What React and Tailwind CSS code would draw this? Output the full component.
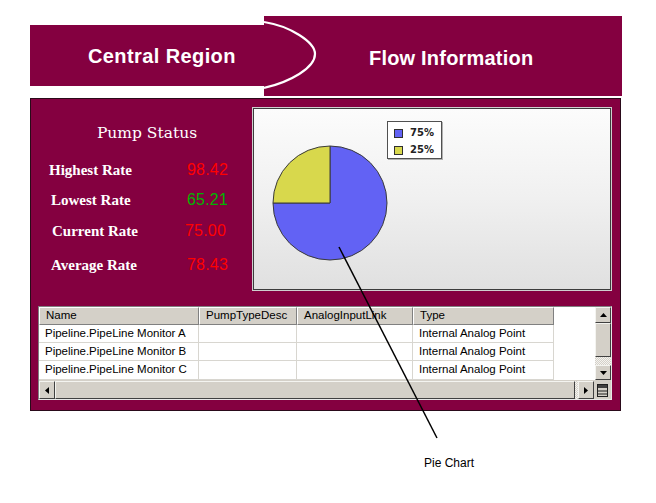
import React from "react";

const maroon = "bg-[#840040]";

function HeaderCell({ w, children }) {
  return (
    <div
      className={`h-full flex items-center pl-[6px] bg-[#d4d0c8] border-t border-l border-t-white border-l-white border-b border-r border-b-[#808080] border-r-[#808080] shrink-0`}
      style={{ width: w }}
    >
      {children}
    </div>
  );
}

function Cell({ w, children }) {
  return (
    <div className="h-full flex items-center pl-[6px] border-r border-[#d8d6d0] shrink-0" style={{ width: w }}>
      {children}
    </div>
  );
}

function Btn({ className = "", children }) {
  return (
    <div
      className={`flex items-center justify-center bg-[#d4d0c8] border-t border-l border-t-[#f4f4f0] border-l-[#f4f4f0] border-b border-r border-b-[#404040] border-r-[#404040] shrink-0 ${className}`}
    >
      {children}
    </div>
  );
}

const cols = [160, 98, 116, 141];

export default function App() {
  const rows = ["A", "B", "C"];
  return (
    <div className="relative w-[656px] h-[503px] bg-white overflow-hidden" style={{ fontFamily: '"Liberation Sans", Arial, sans-serif' }}>
      <div className="pl-[30px] pt-[16px]">
        {/* Header */}
        <div className="relative flex w-[592px] h-[80px]">
          <div className={`mt-[9px] h-[61px] w-[234px] ${maroon} flex items-center pl-[58px] text-white font-bold text-[20px] tracking-[0.4px]`}>
            Central Region
          </div>
          <div className={`w-[358px] h-[80px] ${maroon} flex items-center pl-[105px] pt-[4px] text-white font-bold text-[20px] tracking-[0.2px]`}>
            Flow Information
          </div>
          <svg className="absolute left-[234px] top-0" width="60" height="80" viewBox="0 0 60 80">
            <path d="M0 6 C 26 10, 51 26, 51 38 C 51 52, 26 66, 0 72" fill="none" stroke="white" strokeWidth="2.2" />
          </svg>
        </div>

        {/* Main panel */}
        <div className={`mt-[2px] w-[591px] h-[313px] border border-[#2a0a1a] ${maroon} flex flex-col`}>
          <div className="flex items-start">
            {/* Left status */}
            <div className="w-[222px] pt-[25px] text-white">
              <div className="h-[18px] leading-[18px] text-center pl-[10px] text-[15.5px]" style={{ fontFamily: '"DejaVu Serif", serif' }}>
                Pump Status
              </div>
              {[
                { l: "Highest Rate", v: "98.42", c: "text-[#ff0000]", mt: "mt-[20px]", lx: "pl-[18px]", vx: "w-[138px]" },
                { l: "Lowest Rate", v: "65.21", c: "text-[#00b400]", mt: "mt-[14px]", lx: "pl-[20px]", vx: "w-[136px]" },
                { l: "Current Rate", v: "75.00", c: "text-[#ff0000]", mt: "mt-[15px]", lx: "pl-[21px]", vx: "w-[133px]" },
                { l: "Average Rate", v: "78.43", c: "text-[#ff0000]", mt: "mt-[18px]", lx: "pl-[20px]", vx: "w-[136px]" },
              ].map((r) => (
                <div key={r.l} className={`flex items-center h-[16px] ${r.mt} ${r.lx}`}>
                  <div className={`${r.vx} shrink-0 text-[15px] font-bold leading-[16px]`} style={{ fontFamily: '"Liberation Serif", serif' }}>
                    {r.l}
                  </div>
                  <div className={`${r.c} text-[16px] leading-[16px] tracking-[0.2px]`} style={{ fontFamily: '"Liberation Sans", Arial, sans-serif' }}>
                    {r.v}
                  </div>
                </div>
              ))}
            </div>

            {/* Chart */}
            <div className="mt-[9px] w-[358px] h-[182px] border border-[#3c3c3c] shadow-[0_0_0_1px_#cfcfcf] bg-gradient-to-b from-[#fcfcfc] via-[#f0f0f0] to-[#e0e0e0] flex items-start">
              <svg className="ml-[18px] mt-[36px] shrink-0" width="116" height="116" viewBox="0 0 116 116">
                <path d="M58 58 L58 1 A57 57 0 1 1 1 58 Z" fill="#6262f4" stroke="#3a3a3a" strokeWidth="1" />
                <path d="M58 58 L1 58 A57 57 0 0 1 58 1 Z" fill="#d8d84c" stroke="#3a3a3a" strokeWidth="1" />
              </svg>
              <div className="-ml-[1px] mt-[12px] w-[55px] h-[38px] bg-white border border-[#505050] shadow-[1px_1px_0_#b0b0b0] pt-[4px] pl-[6px]" style={{ fontFamily: '"DejaVu Sans", Verdana, sans-serif' }}>
                {[
                  ["75%", "bg-[#6262f4]"],
                  ["25%", "bg-[#d8d84c]"],
                ].map(([t, c]) => (
                  <div key={t} className="flex items-center h-[14px] mb-[3px]">
                    <div className={`w-[9px] h-[9px] ${c} border border-[#303030]`} />
                    <div className="ml-[7px] text-[10px] font-bold text-[#222] leading-[14px]">{t}</div>
                  </div>
                ))}
              </div>
            </div>
          </div>

          {/* Table */}
          <div className="mt-[16px] ml-[7px] w-[574px] h-[94px] border border-t-[#808080] border-l-[#808080] border-b-[#e8e8e8] border-r-[#e8e8e8] bg-white flex flex-col text-[11.5px] text-black">
            <div className="flex h-[73px]">
              <div className="w-[556px] flex flex-col">
                <div className="flex h-[18px]">
                  <HeaderCell w={cols[0]}>Name</HeaderCell>
                  <HeaderCell w={cols[1]}>PumpTypeDesc</HeaderCell>
                  <HeaderCell w={cols[2]}>AnalogInputLink</HeaderCell>
                  <HeaderCell w={cols[3]}>Type</HeaderCell>
                </div>
                {rows.map((r, i) => (
                  <div key={r} className={`flex ${i === 2 ? "h-[19px]" : "h-[18px]"}`}>
                    <div className="flex border-b border-[#d8d6d0]">
                      <Cell w={cols[0]}>Pipeline.PipeLine Monitor {r}</Cell>
                      <Cell w={cols[1]}></Cell>
                      <Cell w={cols[2]}></Cell>
                      <Cell w={cols[3]}>Internal Analog Point</Cell>
                    </div>
                  </div>
                ))}
              </div>
              {/* vertical scrollbar */}
              <div className="w-[16px] flex flex-col bg-[#e6e4e0]">
                <Btn className="h-[16px]">
                  <svg width="7" height="4" viewBox="0 0 7 4"><path d="M3.5 0 L7 4 L0 4 Z" fill="#000" /></svg>
                </Btn>
                <Btn className="h-[34px]" />
                <div className="flex-1" style={{ backgroundImage: "repeating-conic-gradient(#d4d0c8 0 25%, #f4f3f0 0 50%)", backgroundSize: "2px 2px" }} />
                <Btn className="h-[15px]">
                  <svg width="7" height="4" viewBox="0 0 7 4"><path d="M0 0 L7 0 L3.5 4 Z" fill="#000" /></svg>
                </Btn>
              </div>
            </div>
            {/* horizontal scrollbar */}
            <div className="flex h-[19px] border-t border-[#d4d0c8] bg-[#d4d0c8]">
              <Btn className="w-[16px] h-full">
                <svg width="4" height="7" viewBox="0 0 4 7"><path d="M4 0 L4 7 L0 3.5 Z" fill="#000" /></svg>
              </Btn>
              <Btn className="flex-1 h-full" />
              <div className="w-[3px]" style={{ backgroundImage: "repeating-conic-gradient(#d4d0c8 0 25%, #f4f3f0 0 50%)", backgroundSize: "2px 2px" }} />
              <Btn className="w-[16px] h-full">
                <svg width="4" height="7" viewBox="0 0 4 7"><path d="M0 0 L4 3.5 L0 7 Z" fill="#000" /></svg>
              </Btn>
              <div className="w-[17px] h-full bg-[#d4d0c8] flex items-center justify-center">
                <svg width="11" height="13" viewBox="0 0 11 13">
                  <rect x="0.5" y="0.5" width="10" height="12" fill="#d4d0c8" stroke="#202020" />
                  <rect x="1" y="1" width="9" height="3" fill="#404040" />
                  <line x1="1" y1="7" x2="10" y2="7" stroke="#202020" />
                  <line x1="1" y1="10" x2="10" y2="10" stroke="#202020" />
                </svg>
              </div>
            </div>
          </div>
        </div>

        <div className="mt-[45px] ml-[394px] text-[12px] leading-[14px] text-black">Pie Chart</div>
      </div>

      {/* pointer line */}
      <svg className="absolute left-0 top-0 pointer-events-none" width="656" height="503" viewBox="0 0 656 503">
        <line x1="339" y1="247" x2="437" y2="438" stroke="#000" strokeWidth="1.5" />
      </svg>
    </div>
  );
}
